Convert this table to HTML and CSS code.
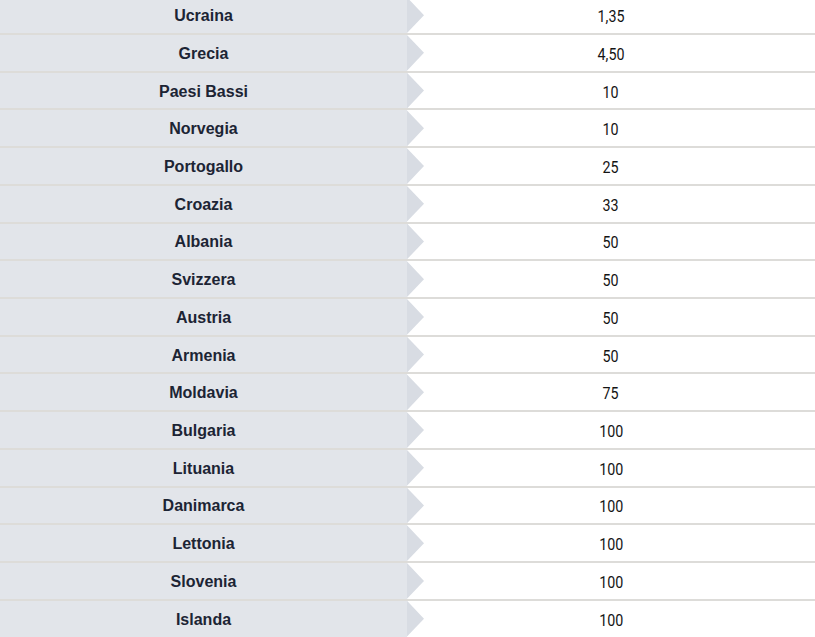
FILE: index.html
```html
<!DOCTYPE html>
<html lang="it">
<head>
<meta charset="utf-8">
<title>Tabella</title>
<link rel="stylesheet" href="styles.css">
</head>
<body>
<div class="list">
  <div class="row"><div class="country">Ucraina</div><div class="value"><span class="num">1,35</span></div></div>
  <div class="row"><div class="country">Grecia</div><div class="value"><span class="num">4,50</span></div></div>
  <div class="row"><div class="country">Paesi Bassi</div><div class="value"><span class="num">10</span></div></div>
  <div class="row"><div class="country">Norvegia</div><div class="value"><span class="num">10</span></div></div>
  <div class="row"><div class="country">Portogallo</div><div class="value"><span class="num">25</span></div></div>
  <div class="row"><div class="country">Croazia</div><div class="value"><span class="num">33</span></div></div>
  <div class="row"><div class="country">Albania</div><div class="value"><span class="num">50</span></div></div>
  <div class="row"><div class="country">Svizzera</div><div class="value"><span class="num">50</span></div></div>
  <div class="row"><div class="country">Austria</div><div class="value"><span class="num">50</span></div></div>
  <div class="row"><div class="country">Armenia</div><div class="value"><span class="num">50</span></div></div>
  <div class="row"><div class="country">Moldavia</div><div class="value"><span class="num">75</span></div></div>
  <div class="row"><div class="country">Bulgaria</div><div class="value"><span class="num">100</span></div></div>
  <div class="row"><div class="country">Lituania</div><div class="value"><span class="num">100</span></div></div>
  <div class="row"><div class="country">Danimarca</div><div class="value"><span class="num">100</span></div></div>
  <div class="row"><div class="country">Lettonia</div><div class="value"><span class="num">100</span></div></div>
  <div class="row"><div class="country">Slovenia</div><div class="value"><span class="num">100</span></div></div>
  <div class="row"><div class="country">Islanda</div><div class="value"><span class="num">100</span></div></div>
</div>
</body>
</html>
```
FILE: styles.css
```css
html, body {
  margin: 0;
  padding: 0;
  background: #ffffff;
  overflow: hidden;
}

.list {
  margin-top: -2.73px;
}

.row {
  display: grid;
  grid-template-columns: 407px 1fr;
  height: 35.73px;
  border-bottom: 2px solid #dddcd9;
}

.country {
  position: relative;
  display: flex;
  align-items: center;
  justify-content: center;
  padding-top: 2px;
  background: #e2e5ea;
  color: #1c2434;
  font-family: "Liberation Sans", Arial, sans-serif;
  font-weight: bold;
  font-size: 16px;
}

.country::after {
  content: "";
  position: absolute;
  left: 100%;
  top: 0;
  bottom: 0;
  width: 17px;
  background: #d8dce3;
  clip-path: polygon(0 0, 100% 50%, 0 100%);
}

.value {
  display: flex;
  align-items: center;
  justify-content: center;
  padding-top: 2px;
  color: #141414;
  font-family: Roboto, "Liberation Sans", sans-serif;
  font-size: 17px;
}

.num {
  display: inline-block;
  transform: scaleX(0.84);
}
```
